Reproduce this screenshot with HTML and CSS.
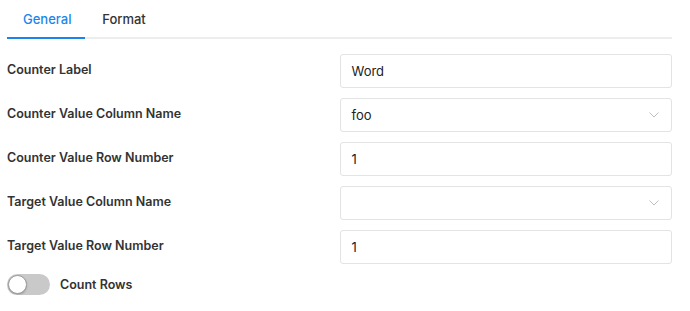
FILE: index.html
```html
<!DOCTYPE html>
<html lang="en">
<head>
    <meta charset="UTF-8">
    <meta name="viewport" content="width=device-width, initial-scale=1.0">
    <title>Counter Settings</title>
    <link rel="stylesheet" href="styles.css">
</head>
<body>
    <div class="panel">
        <div class="tabs">
            <div class="tab active">General</div>
            <div class="tab">Format</div>
        </div>

        <div class="form">
            <div class="row">
                <label class="label">Counter Label</label>
                <div class="field">Word</div>
            </div>
            <div class="row">
                <label class="label">Counter Value Column Name</label>
                <div class="field select">
                    <span>foo</span>
                    <svg class="chevron" width="10" height="6" viewBox="0 0 10 6"><path d="M0.5 0.5 L5 5 L9.5 0.5" fill="none" stroke="#bdbdbd" stroke-width="1"/></svg>
                </div>
            </div>
            <div class="row">
                <label class="label">Counter Value Row Number</label>
                <div class="field">1</div>
            </div>
            <div class="row">
                <label class="label">Target Value Column Name</label>
                <div class="field select">
                    <span></span>
                    <svg class="chevron" width="10" height="6" viewBox="0 0 10 6"><path d="M0.5 0.5 L5 5 L9.5 0.5" fill="none" stroke="#bdbdbd" stroke-width="1"/></svg>
                </div>
            </div>
            <div class="row">
                <label class="label">Target Value Row Number</label>
                <div class="field">1</div>
            </div>
        </div>

        <div class="switch-row">
            <span class="switch"><span class="knob"></span></span>
            <span class="switch-label">Count Rows</span>
        </div>
    </div>
</body>
</html>
```

FILE: styles.css
```css
body {
    margin: 0;
    padding: 0 18px 0 7px;
    font-family: Inter, "Liberation Sans", Arial, sans-serif;
    font-size: 13px;
    color: #333;
    background: #fff;
}
.tabs {
    display: flex;
    height: 37px;
    border-bottom: 2px solid #ededed;
}
.tab {
    padding: 11px 16px 0;
    font-weight: 500;
    color: #333;
    width: 46px;
    text-align: center;
}
.tab.active {
    color: #1a86ec;
    border-bottom: 2px solid #1a86ec;
    margin-bottom: -2px;
}
.form {
    display: flex;
    flex-direction: column;
    gap: 10px;
    padding-top: 15px;
}
.row {
    display: grid;
    grid-template-columns: 1fr 1fr;
    align-items: center;
}
.label {
    font-weight: 600;
    font-size: 12.5px;
    color: #333;
    margin-top: -3px;
}
.field {
    height: 32px;
    border: 1px solid #e3e3e3;
    border-radius: 3px;
    padding: 0 11px;
    display: flex;
    align-items: center;
    justify-content: space-between;
    font-size: 13px;
    color: #222;
}
.chevron {
    margin-right: 1px;
}
.switch-row {
    display: flex;
    align-items: center;
    gap: 10px;
    margin-top: 10px;
}
.switch {
    display: block;
    position: relative;
    width: 43px;
    height: 21px;
    border-radius: 11px;
    background: #c9c9c9;
}
.knob {
    position: absolute;
    left: 1px;
    top: 1px;
    width: 17px;
    height: 17px;
    border-radius: 50%;
    background: #fff;
    border: 1px solid #9b9b9b;
    box-shadow: 0 1px 2px rgba(0,0,0,0.2);
}
.switch-label {
    font-weight: 600;
    font-size: 12.5px;
    color: #333;
}
```
